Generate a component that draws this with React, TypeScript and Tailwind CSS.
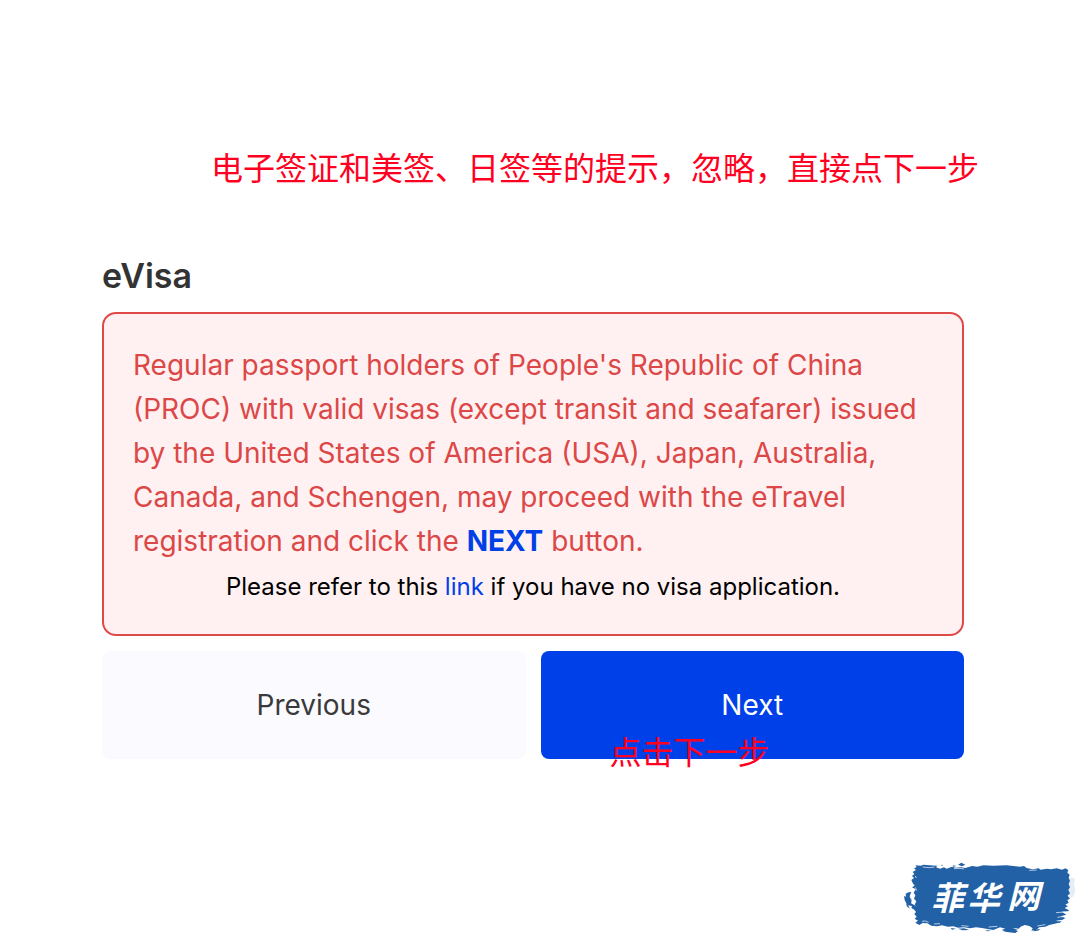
function BrandMark() {
  return (
    <svg viewBox="0 0 570 282" className="h-[94px] w-[190px]" role="img" aria-label="菲华网">
      <path fill="#e6edf6" d="M534 86L546 82L555 88L552 104L556 122L550 140L538 144Z" />
      <path
        fill="#2361a7"
        d="M76 46L92 47L100 44L118 46L142 47L138 52L150 56L162 52L170 56L186 50L196 53L214 52L226 54L246 48L262 50L280 46L310 47L350 46L390 50L402 48L410 54L428 58L446 55L452 59L470 56L484 58L500 55L516 59L526 55L535 60L532 68L539 74L536 84L540 92L536 102L540 112L535 120L540 130L533 137L540 146L532 150L536 158L526 164L534 169L524 174L534 179L538 183L516 185L522 190L529 194L512 199L526 204L518 209L498 212L512 217L494 221L478 225L466 230L448 232L440 239L424 242L428 235L418 228L404 225L392 230L386 236L368 234L384 240L372 244L350 241L334 240L346 236L330 232L310 240L292 237L276 234L258 232L240 235L222 232L204 233L190 229L174 230L156 226L142 229L124 227L112 220L98 219L88 225L76 218L84 212L74 206L80 200L73 192L78 186L72 178L80 172L74 164L79 154L72 146L76 136L71 128L77 118L66 112L74 107L68 99L64 90L72 84L66 78L73 72L68 66L78 60L72 55L80 51Z"
      />
      <path
        fill="#2361a7"
        d="M56 127L64 126L59 138L66 150L63 160L74 166L82 172L78 182L64 174L66 168L54 166L60 176L50 169L49 160L44 150L42 138L48 140L47 131Z"
      />
      <path
        fill="#2361a7"
        d="M204 44L214 38L226 44L216 49ZM188 46L200 48L190 50ZM154 44L160 45L155 48ZM336 242L352 238L384 243L376 249L350 246ZM204 236L222 235L238 240L218 241ZM182 234L198 236L186 239ZM434 240L452 236L444 242L428 244ZM500 216L516 212L508 219ZM286 240L304 242L292 244Z"
      />
      <g fill="none" stroke="#fff" strokeWidth="2">
        <path d="M98 51L118 53L134 51M192 56L210 55L222 57M418 61L440 60M498 188L524 186M502 202L518 200M96 214L106 213L116 217M132 222L150 221M214 227L236 229M296 231L322 229M442 228L466 224M60 140L70 162M76 112L80 122M76 78L79 84" />
      </g>
      <g
        fill="#fff"
        className="font-['Noto_Sans_CJK_SC',sans-serif] font-bold italic"
        fontSize="98"
      >
        <text x="124" y="180">菲</text>
        <text x="232" y="180">华</text>
        <text x="352" y="174">网</text>
      </g>
    </svg>
  );
}

export default function App() {
  return (
    <div className="flex min-h-screen flex-col bg-white font-['Inter','Noto_Sans_CJK_SC',sans-serif]">
      <p className="pt-[145px] pr-[101px] text-right text-[32px] leading-[48px] text-[#ff0022]">
        电子签证和美签、日签等的提示，忽略，直接点下一步
      </p>
      <main className="mt-[59px] pr-[116px] pl-[102px]">
        <h1 className="text-[34px] leading-[48px] font-semibold text-[#333333]">eVisa</h1>
        <section className="mt-3 rounded-[14px] border-2 border-[#df4a48] bg-[#fff1f1] px-[29px] pt-[29px] pb-[27px]">
          <p className="text-[28px] leading-[44px] text-[#dc4747]">
            Regular passport holders of People's Republic of China (PROC) with valid visas (except
            transit and seafarer) issued by the United States of America (USA), Japan, Australia,
            Canada, and Schengen, may proceed with the eTravel registration and click the{' '}
            <strong className="font-bold text-[#0040e8]">NEXT</strong> button.
          </p>
          <p className="pt-1 text-center text-[24px] leading-[40px] text-black">
            Please refer to this{' '}
            <a href="#visa" className="text-[#0040e8]">
              link
            </a>{' '}
            if you have no visa application.
          </p>
        </section>
        <div className="mt-[15px] grid grid-cols-2 gap-[15px]">
          <button
            type="button"
            className="h-[108px] rounded-lg bg-[#fafaff] text-[28px] text-[#3a3a3a]"
          >
            Previous
          </button>
          <div className="relative">
            <button
              type="button"
              className="h-[108px] w-full rounded-lg bg-[#0040e8] text-[28px] text-white"
            >
              Next
            </button>
            <span className="pointer-events-none absolute top-[78px] left-[69px] text-[32px] leading-[48px] whitespace-nowrap text-[#ff0022]">
              点击下一步
            </span>
          </div>
        </div>
      </main>
      <footer className="mt-auto flex justify-end">
        <BrandMark />
      </footer>
    </div>
  );
}
